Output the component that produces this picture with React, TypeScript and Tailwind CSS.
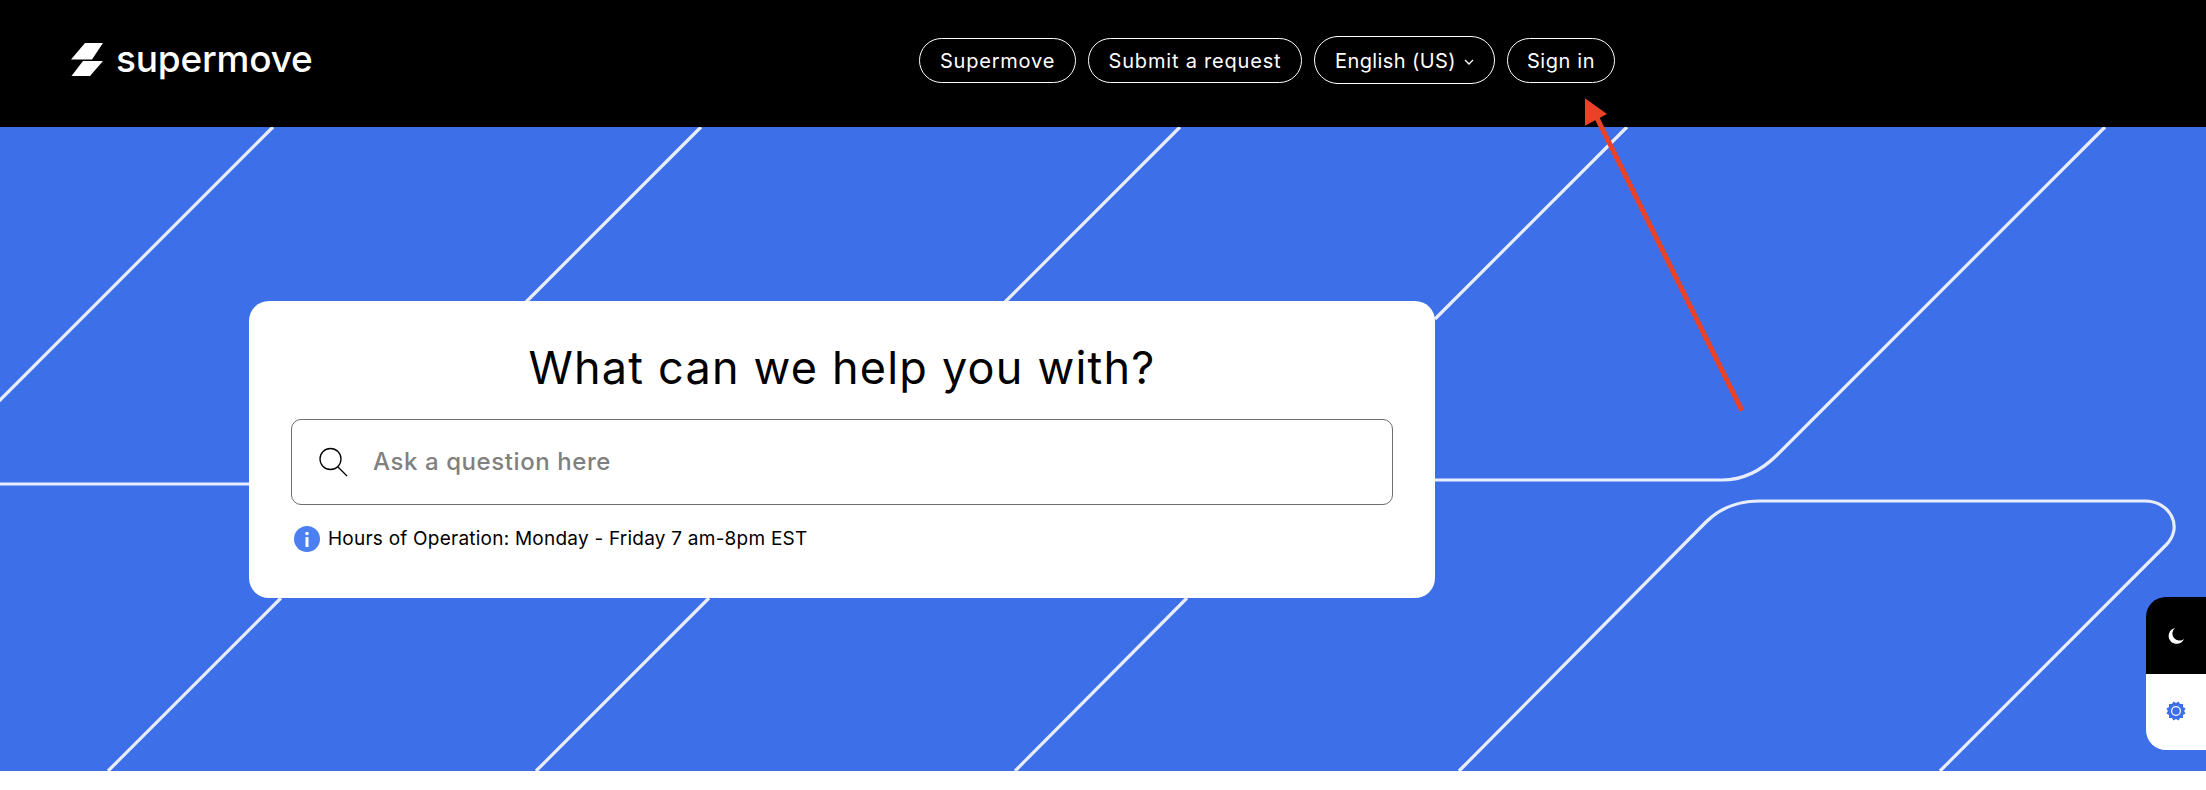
import React from "react";

function Pill({ children, w, h, t }: { children: React.ReactNode; w: string; h: string; t: string }) {
  return (
    <a className={`flex items-center justify-center rounded-full border border-white pt-[1px] text-white text-[20px] ${t} ${w} ${h}`}>
      {children}
    </a>
  );
}

function Lines() {
  return (
    <svg className="absolute inset-0 h-full w-full" viewBox="0 127 2206 644" fill="none">
      <g strokeWidth="3.2" strokeOpacity="0.88" className="stroke-white blur-[0.6px]">
        <path d="M273 127 L-3 403" />
        <path d="M701 127 L526 302" />
        <path d="M1180 127 L1005 302" />
        <path d="M1627 127 L1435 319" />
        <path d="M2105 127 L1777 455 C1762 470 1745 480 1722 480 L1430 480" />
        <path d="M-2 484 L252 484" />
        <path d="M281 598 L108 771" />
        <path d="M709 598 L536 771" />
        <path d="M1187 598 L1015 771" />
        <path d="M1459 771 L1706 522 C1720 508 1738 501 1760 501 L2145 501 C2170 501 2184 527 2166 545 L1940 771" />
      </g>
    </svg>
  );
}

export default function App() {
  return (
    <div className="relative w-[2206px] h-[790px] overflow-hidden bg-white font-['Inter',sans-serif]">
      <header className="flex h-[127px] items-center bg-black pl-[71px] pb-[7px]">
        <div className="flex w-[848px] shrink-0 items-center">
          <svg width="34" height="34" viewBox="0 0 34 34" className="shrink-0 fill-white">
            <polygon points="14,0 32,0 21,16.5 0,16.5" />
            <polygon points="12,18 32,18 19,33 0.5,33" />
          </svg>
          <span className="ml-[11px] -mt-[4px] text-[37px] font-medium leading-none tracking-[-0.2px] text-white">supermove</span>
        </div>
        <nav className="flex items-center gap-[12px]">
          <Pill w="w-[157px]" h="h-[45px]" t="tracking-[0.8px]">Supermove</Pill>
          <Pill w="w-[214px]" h="h-[45px]" t="tracking-[0.8px]">Submit a request</Pill>
          <Pill w="w-[181px]" h="h-[48px]" t="tracking-[0.4px]">
            English (US)
            <svg width="10" height="6" viewBox="0 0 10 6" fill="none" className="ml-[8px] mt-[2px] stroke-white" strokeWidth="1.3">
              <path d="M1 1 L5 5 L9 1" />
            </svg>
          </Pill>
          <Pill w="w-[108px]" h="h-[45px]" t="tracking-[0.6px]">Sign in</Pill>
        </nav>
      </header>

      <main className="relative h-[644px] bg-[#3d6fe9] pl-[249px] pt-[174px]">
        <Lines />
        <section className="relative flex h-[297px] w-[1186px] flex-col rounded-[20px] bg-white px-[42px]">
          <h1 className="mt-[40px] text-center text-[45px] font-normal leading-[54px] tracking-[1.2px] text-black">What can we help you with?</h1>
          <div className="mt-[24px] flex h-[86px] items-center rounded-[10px] border border-[#6e6e6e] pl-[26px]">
            <svg width="30" height="30" viewBox="0 0 30 30" fill="none" className="shrink-0 stroke-black" strokeWidth="1.3">
              <circle cx="12.5" cy="12" r="10.5" />
              <path d="M20 20 L29 29" />
            </svg>
            <input
              placeholder="Ask a question here"
              className="ml-[25px] flex-1 bg-transparent text-[24px] font-medium tracking-[0.58px] outline-none placeholder:text-[#808080]"
            />
          </div>
          <div className="mt-[20px] flex items-center pl-[3px]">
            <svg width="26" height="26" viewBox="0 0 26 26" className="shrink-0">
              <circle cx="13" cy="13" r="13" className="fill-[#4b7ff2]" />
              <circle cx="13" cy="7.5" r="1.8" className="fill-white" />
              <rect x="11.5" y="11" width="3" height="10" rx="0.6" className="fill-white" />
            </svg>
            <p className="ml-[8px] text-[19px] tracking-[0.23px] text-black">Hours of Operation: Monday - Friday 7 am-8pm EST</p>
          </div>
        </section>
      </main>

      <div className="h-[19px] bg-white" />

      <aside className="absolute left-[2146px] top-[597px] w-[60px] overflow-hidden rounded-l-[20px]">
        <div className="flex h-[77px] items-center justify-center bg-black">
          <svg width="18" height="18" viewBox="0 0 18 18" className="fill-white">
            <path d="M8 1 A8 8 0 1 0 17 12 A7 7 0 0 1 8 1Z" />
          </svg>
        </div>
        <div className="flex h-[76px] items-center justify-center bg-white pb-[2px]">
          <svg width="22" height="22" viewBox="0 0 22 22">
            <rect x="4" y="4" width="14" height="14" className="fill-[#3d6fe9]" />
            <rect x="4" y="4" width="14" height="14" transform="rotate(30 11 11)" className="fill-[#3d6fe9]" />
            <rect x="4" y="4" width="14" height="14" transform="rotate(60 11 11)" className="fill-[#3d6fe9]" />
            <circle cx="11" cy="11" r="5" className="fill-white" />
            <circle cx="11" cy="11" r="3.8" className="fill-[#3d6fe9]" />
          </svg>
        </div>
      </aside>

      <svg className="pointer-events-none absolute inset-0 h-full w-full" viewBox="0 0 2206 790" fill="none">
        <path d="M1742 410.7 L1593 110" stroke="#e94227" strokeWidth="5" />
        <polygon points="1585,98.3 1607,114 1585,125.7" fill="#e94227" />
      </svg>
    </div>
  );
}
